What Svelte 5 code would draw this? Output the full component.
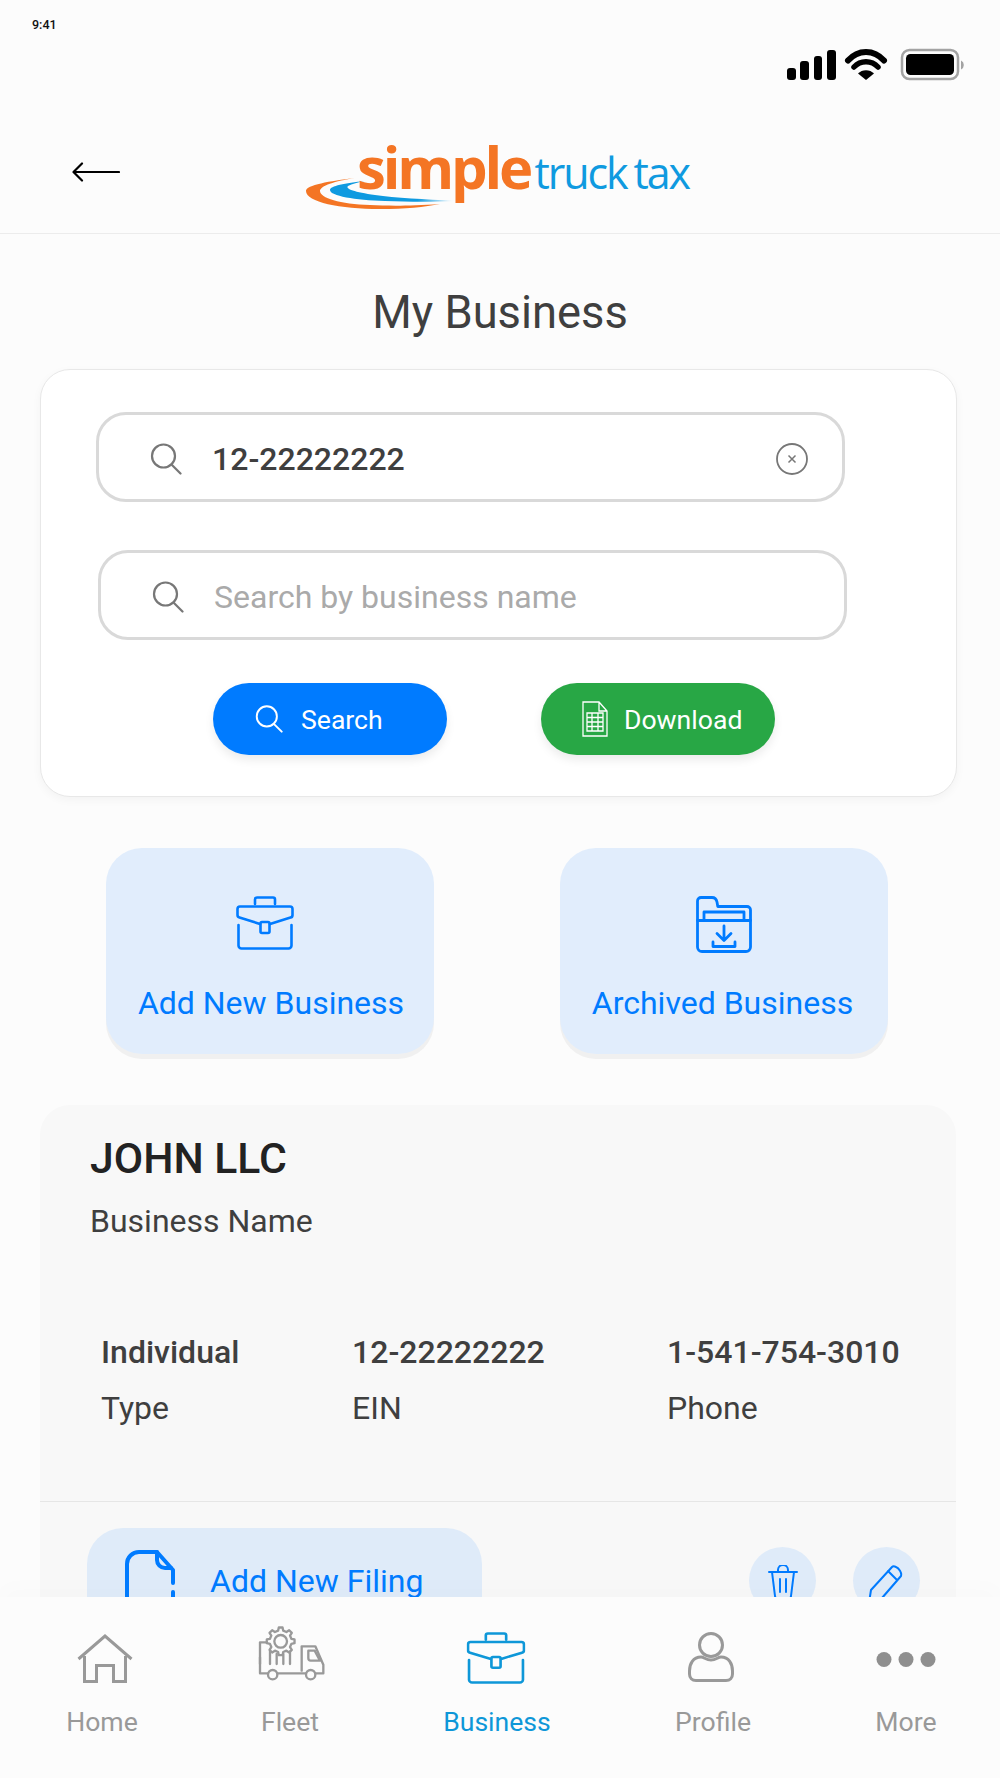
<script>
  function gear(cx, cy, ro, ri, n) {
    let d = '';
    const step = (Math.PI * 2) / n;
    for (let i = 0; i < n; i++) {
      const a = i * step - Math.PI / 2;
      const pts = [
        [ri, a - step * 0.3],
        [ro, a - step * 0.17],
        [ro, a + step * 0.17],
        [ri, a + step * 0.3]
      ];
      for (const [r, t] of pts) {
        d += (d ? 'L' : 'M') + (cx + r * Math.cos(t)).toFixed(1) + ' ' + (cy + r * Math.sin(t)).toFixed(1);
      }
    }
    return d + 'Z';
  }
  const gearPath = gear(122, 82, 42, 33, 8);
  const details = [
    { value: 'Individual', label: 'Type' },
    { value: '12-22222222', label: 'EIN' },
    { value: '1-541-754-3010', label: 'Phone' }
  ];
</script>

{#snippet briefcase(cls)}
  <svg class={cls} viewBox="0 0 58 54" preserveAspectRatio="none" fill="none" stroke="currentColor" stroke-width="2.6" stroke-linejoin="round" stroke-linecap="round">
    <path d="M19 8V3.5a2 2 0 0 1 2-2h16a2 2 0 0 1 2 2V8" />
    <path d="M24 28L3.5 21.5a2.5 2.5 0 0 1-2-2.5V13a2.5 2.5 0 0 1 2.500-2.500h50a2.500 2.500 0 0 1 2.500 2.500v6a2.500 2.500 0 0 1-2 2.500L34 28" />
    <path d="M2.500 29v20.500a3 3 0 0 0 3 3h47a3 3 0 0 0 3-3V29" />
    <rect x="24.500" y="26" width="9" height="11" rx="1.500" />
  </svg>
{/snippet}

{#snippet searchIcon(cls)}
  <svg class={cls} viewBox="0 0 32 32" fill="none" stroke="currentColor" stroke-width="2.2" stroke-linecap="round">
    <circle cx="13.500" cy="13" r="11.500" />
    <path d="M21.500 21.500L30.500 30.500" />
  </svg>
{/snippet}

<div class="screen">
  <div class="status">
    <span class="time">9:41</span>
    <svg class="status-icons" viewBox="0 0 178 34" fill="#000">
      <rect x="0" y="20" width="9" height="12" rx="3" />
      <rect x="13" y="13" width="9" height="19" rx="3" />
      <rect x="27" y="8" width="8" height="24" rx="3" />
      <rect x="40" y="2" width="9" height="30" rx="3" />
      <path d="M61 12.500C71 1 87 1 97 12.500" fill="none" stroke="#000" stroke-width="6" stroke-linecap="round" />
      <path d="M67 19C73.500 12 84.500 12 91 19" fill="none" stroke="#000" stroke-width="5.500" stroke-linecap="round" />
      <path d="M71 25.500C75 21 83 21 87 25.500L79 32Z" />
      <rect x="115" y="2" width="56" height="29" rx="7.500" fill="none" stroke="#a3a3a3" stroke-width="2.500" />
      <rect x="119" y="6" width="48" height="21" rx="4.500" />
      <path d="M174 12.500a5 5 0 0 1 0 9Z" fill="#a3a3a3" />
    </svg>
  </div>

  <header class="top">
    <svg class="back" viewBox="0 0 48 20" fill="none" stroke="#000" stroke-width="2.200" stroke-linecap="round" stroke-linejoin="round">
      <path d="M47 10H2M10 1.500L1.500 10L10 18.500" />
    </svg>
    <div class="logo">
      <svg class="swoosh" viewBox="0 0 200 90">
        <defs>
          <linearGradient id="sw" x1="0" x2="1" y1="0" y2="0">
            <stop offset="0.700" stop-color="#0f9ae0" />
            <stop offset="1" stop-color="#ffffff" />
          </linearGradient>
        </defs>
        <path d="M75 48C50 51 26 55 26 61C26 72 60 79 100 79C125 79 145 77 160 74C130 76 110 76 90 75C60 74 40 68 40 61C40 56 55 51 75 48Z" fill="#f47524" />
        <path d="M85 51C65 53 50 56 50 60C50 66 75 70 105 71C130 72 155 72 175 71C145 69 115 68 95 65C75 62 65 59 68 56C72 54 78 52 85 51Z" fill="url(#sw)" />
      </svg>
      <span class="simple">simple</span>
      <span class="truck">truck tax</span>
    </div>
  </header>

  <main>
    <h1>My Business</h1>

    <section class="search-card">
      <div class="field first">
        {@render searchIcon('field-search')}
        <span class="value">12-22222222</span>
        <svg class="clear" viewBox="0 0 32 32" fill="none" stroke="#777" stroke-width="1.800">
          <circle cx="16" cy="16" r="15" />
          <path d="M12.500 12.500L19.500 19.500M19.500 12.500L12.500 19.500" stroke-width="1.500" />
        </svg>
      </div>
      <div class="field second">
        {@render searchIcon('field-search')}
        <span class="placeholder">Search by business name</span>
      </div>
      <div class="actions">
        <div class="btn blue">
          {@render searchIcon('btn-search')}
          <span>Search</span>
        </div>
        <div class="btn green">
          <svg class="sheet" viewBox="0 0 26 36" fill="none" stroke="#fff" stroke-width="1.300">
            <path d="M1 1H17L25 10V35H1ZM17 1V10H25" />
            <path d="M5 12H21V30H5ZM5 16.500H21M5 21H21M5 25.500H21M10 12V30M16 12V30" />
          </svg>
          <span>Download</span>
        </div>
      </div>
    </section>

    <section class="tiles">
      <div class="tile">
        {@render briefcase('tile-case')}
        <span>Add New Business</span>
      </div>
      <div class="tile">
        <svg class="folder" viewBox="0 0 56 57" fill="none" stroke="currentColor" stroke-width="2.800" stroke-linejoin="round" stroke-linecap="round">
          <path d="M1.500 5a3.500 3.500 0 0 1 3.500-3.500h11c3 0 4.500 2 5 4.500l.8 4.500H51a3.500 3.500 0 0 1 3.500 3.500V51a4.500 4.500 0 0 1-4.500 4.500H6A4.500 4.500 0 0 1 1.500 51Z" />
          <path d="M8 24V16H48V24M1.500 24.500H54.500" />
          <path d="M28 30V44M21 37.500L28 44.500L35 37.500M17 46V50.500H39V46" />
        </svg>
        <span>Archived Business</span>
      </div>
    </section>

    <section class="business">
      <div class="name">JOHN LLC</div>
      <div class="sub">Business Name</div>
      <div class="details">
        {#each details as d}
          <div class="detail">
            <div class="detail-value">{d.value}</div>
            <div class="detail-label">{d.label}</div>
          </div>
        {/each}
      </div>
      <div class="row">
        <div class="add-filing">
          <svg class="file" viewBox="0 0 50 70" fill="none" stroke="currentColor" stroke-width="4" stroke-linecap="round" stroke-linejoin="round">
            <path d="M48 33V20L32 2H14A12 12 0 0 0 2 14V68" />
            <path d="M32 2V10A8 8 0 0 0 40 18H46" />
            <path d="M48 42V68" />
          </svg>
          <span>Add New Filing</span>
        </div>
        <div class="round trash">
          <svg viewBox="0 0 30 36" fill="none" stroke="currentColor" stroke-width="2" stroke-linecap="round" stroke-linejoin="round">
            <path d="M1 7H29M10 7V5a5 5 0 0 1 10 0v2M4 7L7 31a3 3 0 0 0 3 3h10a3 3 0 0 0 3-3L26 7M12 14V27M18 14V27" />
          </svg>
        </div>
        <div class="round pencil">
          <svg viewBox="0 0 36 46" fill="none" stroke="currentColor" stroke-width="2" stroke-linecap="round" stroke-linejoin="round">
            <path d="M25 2L4 25L1 44L15 33L34 11C35 8 32 3 29 2C27 1 26 1 25 2ZM21 6L30 15" />
          </svg>
        </div>
      </div>
    </section>
  </main>

  <nav class="tabbar">
    <div class="tab">
      <svg class="ic-home" viewBox="0 0 56 49" fill="none" stroke="currentColor" stroke-width="3">
        <path d="M1.500 25L28 2L54.500 25M7.500 22V47.500H19.500V31.500H36.500V47.500H48.500V22" />
      </svg>
      <span>Home</span>
    </div>
    <div class="tab">
      <svg class="ic-fleet" viewBox="0 0 300 240" fill="none" stroke="currentColor" stroke-width="7" stroke-linecap="round" stroke-linejoin="round">
        <path d={gearPath} />
        <circle cx="122" cy="82" r="19" />
        <path d="M80 85H60V178H84M112 178H198M226 178H250V152L226 97H185V170" />
        <path d="M205 110H224L240 140H212Q205 140 205 132Z" />
        <path d="M60 130V150M90 112V150M110 120V150M130 120V150M150 112V150" />
        <circle cx="98" cy="182" r="14" />
        <circle cx="212" cy="182" r="14" />
      </svg>
      <span>Fleet</span>
    </div>
    <div class="tab active">
      {@render briefcase('ic-case')}
      <span>Business</span>
    </div>
    <div class="tab">
      <svg class="ic-profile" viewBox="0 0 46 50" fill="none" stroke="currentColor" stroke-width="3">
        <circle cx="23" cy="13" r="11.500" />
        <path d="M13 25C5 25 1.500 32 1.500 39V42C1.500 46 4 48.500 8 48.500H38C42 48.500 44.500 46 44.500 42V39C44.500 32 41 25 33 25C30 25 28 28 23 28C18 28 16 25 13 25Z" />
      </svg>
      <span>Profile</span>
    </div>
    <div class="tab">
      <div class="dots"><i></i><i></i><i></i></div>
      <span>More</span>
    </div>
  </nav>
</div>

<style>
  :global(body) {
    margin: 0;
    background: #fcfcfc;
  }
  .screen {
    position: relative;
    width: 1000px;
    height: 1778px;
    overflow: hidden;
    background: #fcfcfc;
    font-family: Roboto, "Liberation Sans", sans-serif;
    color: #3f3f3f;
  }
  .status {
    height: 100px;
    position: relative;
  }
  .time {
    position: absolute;
    left: 32px;
    top: 18px;
    font-size: 12.500px;
    line-height: 14px;
    font-weight: 500;
    color: #111;
  }
  .status-icons {
    position: absolute;
    left: 787px;
    top: 48px;
    width: 178px;
    height: 34px;
  }
  .top {
    display: flex;
    align-items: flex-start;
    height: 134px;
    box-sizing: border-box;
    padding: 30px 0 0 72px;
    border-bottom: 1px solid #ececec;
  }
  .back {
    width: 48px;
    height: 20px;
    margin-top: 32px;
    margin-right: 160px;
    flex: none;
  }
  .logo {
    position: relative;
    display: flex;
    align-items: baseline;
    width: 440px;
    height: 90px;
    padding: 7px 0 0 77px;
    box-sizing: border-box;
  }
  .swoosh {
    position: absolute;
    left: 0;
    top: 0;
    width: 200px;
    height: 90px;
  }
  .simple {
    position: relative;
    font-family: "Open Sans", sans-serif;
    font-weight: 700;
    font-size: 58px;
    line-height: 60px;
    letter-spacing: -3.200px;
    color: #f47524;
  }
  .truck {
    font-family: "Open Sans", sans-serif;
    font-weight: 400;
    font-size: 43px;
    line-height: 60px;
    letter-spacing: -2.100px;
    word-spacing: -2px;
    margin-left: 4.500px;
    color: #0f9ae0;
    white-space: nowrap;
  }
  h1 {
    margin: 0;
    padding: 52px 0 29px;
    font-size: 45.300px;
    line-height: 54px;
    height: 54px;
    font-weight: 400;
    text-align: center;
    color: #3f3f3f;
  }
  .search-card {
    box-sizing: border-box;
    width: 917px;
    height: 428px;
    margin-left: 40px;
    padding: 42px 0 0 55px;
    background: #fff;
    border: 1px solid #e8e8e8;
    border-radius: 30px;
    box-shadow: 0 3px 10px rgba(0, 0, 0, 0.04);
  }
  .field {
    box-sizing: border-box;
    display: flex;
    align-items: center;
    width: 749px;
    height: 90px;
    background: #fff;
    border: 3px solid #d9d9d9;
    border-radius: 30px;
    padding: 4px 0 0 51px;
  }
  .first {
    margin-bottom: 48px;
  }
  .second {
    margin-left: 2px;
  }
  :global(.field-search) {
    width: 32px;
    height: 32px;
    flex: none;
    margin-right: 30px;
    color: #777;
  }
  .value {
    font-size: 32px;
    font-weight: 500;
    color: #3f3f3f;
  }
  .placeholder {
    font-size: 32px;
    color: #aaa;
  }
  .clear {
    width: 32px;
    height: 32px;
    margin-left: auto;
    margin-right: 34px;
  }
  .actions {
    display: flex;
    gap: 94px;
    margin: 43px 0 0 117px;
  }
  .btn {
    display: flex;
    align-items: center;
    box-sizing: border-box;
    width: 234px;
    height: 72px;
    border-radius: 36px;
    color: #fff;
    font-size: 26.600px;
    box-shadow: 0 5px 10px rgba(0, 0, 0, 0.08);
  }
  .blue {
    background: #007bff;
    padding-left: 42px;
  }
  .green {
    background: #28a745;
    padding-left: 41px;
  }
  :global(.btn-search) {
    width: 28px;
    height: 28px;
    margin-right: 18px;
    flex: none;
  }
  .sheet {
    width: 26px;
    height: 36px;
    margin-right: 16px;
    flex: none;
  }
  .tiles {
    display: flex;
    gap: 126px;
    margin: 51px 0 0 106px;
  }
  .tile {
    box-sizing: border-box;
    width: 328px;
    height: 206px;
    padding-top: 48px;
    display: flex;
    flex-direction: column;
    align-items: center;
    background: #e1edfc;
    border-radius: 36px;
    color: #007bff;
    font-size: 32px;
    box-shadow: 0 5px 0 #f0f0f0;
  }
  .tile span {
    line-height: 38px;
    margin-top: 34px;
    white-space: nowrap;
  }
  .tile:first-child span {
    margin-left: 2px;
  }
  .tile:last-child span {
    margin-right: 3px;
  }
  :global(.tile-case) {
    width: 58px;
    height: 54px;
    margin-right: 10px;
  }
  .folder {
    width: 56px;
    height: 57px;
    margin-bottom: -3px;
  }
  .business {
    width: 916px;
    height: 520px;
    margin: 51px 0 0 40px;
    background: #f8f8f8;
    border-radius: 30px 30px 0 0;
    position: relative;
    box-sizing: border-box;
    padding-top: 29px;
  }
  .name {
    margin-left: 50px;
    font-size: 42.700px;
    line-height: 48px;
    font-weight: 500;
    color: #222;
  }
  .sub {
    margin: 21px 0 0 50px;
    font-size: 32px;
    line-height: 36px;
    color: #3f3f3f;
  }
  .details {
    display: grid;
    grid-template-columns: 251px 315px auto;
    margin: 94px 0 0 61px;
  }
  .detail-value {
    font-size: 32px;
    line-height: 38px;
    font-weight: 500;
  }
  .detail-label {
    font-size: 32px;
    line-height: 38px;
    margin-top: 18px;
  }
  .row {
    position: absolute;
    left: 0;
    right: 0;
    top: 396px;
    height: 200px;
    border-top: 1px solid #e6e6e6;
    display: flex;
    align-items: flex-start;
    padding-left: 47px;
    box-sizing: border-box;
  }
  .add-filing {
    box-sizing: border-box;
    display: flex;
    align-items: flex-start;
    width: 395px;
    height: 110px;
    margin-top: 26px;
    padding: 22px 0 0 38px;
    border-radius: 36px;
    background: #dfebf9;
    color: #007bff;
    font-size: 32px;
    margin-right: 267px;
  }
  .add-filing span {
    margin: 12px 0 0 35px;
    line-height: 38px;
  }
  .file {
    width: 50px;
    height: 70px;
    flex: none;
  }
  .round {
    box-sizing: border-box;
    width: 67px;
    height: 67px;
    margin-top: 45px;
    border-radius: 50%;
    background: #dfebf9;
    color: #007bff;
    display: flex;
    justify-content: center;
    padding-top: 18px;
    flex: none;
  }
  .trash {
    margin-right: 37px;
  }
  .trash svg {
    width: 30px;
    height: 36px;
  }
  .pencil svg {
    width: 36px;
    height: 46px;
    margin-left: -3px;
  }
  .tabbar {
    position: absolute;
    left: 0;
    right: 0;
    bottom: 0;
    height: 181px;
    box-sizing: border-box;
    padding-left: 8px;
    display: grid;
    grid-template-columns: 188px 188px 226px 206px 180px;
    background: #fcfcfc;
    box-shadow: 0 -12px 20px rgba(0, 0, 0, 0.012);
    color: #999;
  }
  .tab {
    position: relative;
    text-align: center;
    font-size: 26.600px;
    height: 100%;
  }
  .tab span {
    position: absolute;
    left: 0;
    right: 0;
    top: 107px;
    line-height: 36px;
  }
  .tab svg,
  .dots {
    position: absolute;
    left: 50%;
    transform: translateX(-50%);
  }
  .tab.active {
    color: #0e97d8;
  }
  .ic-home {
    width: 56px;
    height: 49px;
    top: 37px;
    margin-left: 3px;
  }
  .ic-fleet {
    width: 100px;
    height: 80px;
    top: 17px;
  }
  :global(.tab svg.ic-case) {
    width: 59px;
    height: 52px;
    top: 35px;
    margin-left: -1px;
  }
  .ic-profile {
    width: 46px;
    height: 50px;
    top: 35px;
    margin-left: -2px;
  }
  .dots {
    display: flex;
    gap: 7px;
    top: 55px;
  }
  .dots i {
    display: block;
    width: 15px;
    height: 15px;
    border-radius: 50%;
    background: #8f8f8f;
  }
</style>
